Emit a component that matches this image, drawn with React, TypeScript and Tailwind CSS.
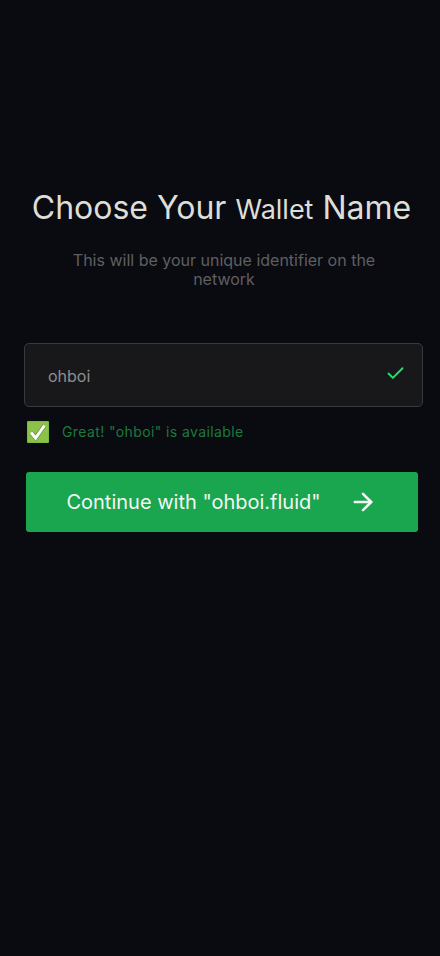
import React from 'react';
import { ArrowRight, Check } from 'lucide-react';

const CheckEmoji = () => (
  <svg width="22" height="22" viewBox="0 0 22 22" className="shrink-0">
    <rect x="0" y="0" width="22" height="22" rx="1" fill="#7fb83f" />
    <rect x="1" y="1" width="20" height="20" rx="1" fill="#8bc34a" />
    <path d="M4 11.5 L8.6 17 L17.5 4.5" fill="none" stroke="#1f3d10" strokeOpacity="0.35" strokeWidth="4.4" />
    <path d="M4 11.5 L8.6 17 L17.5 4.5" fill="none" stroke="#fff" strokeWidth="3" />
  </svg>
);

export default function App() {
  return (
    <div className="w-[440px] h-[956px] bg-[#0a0b10] overflow-hidden font-['Inter',sans-serif]">
      <div className="flex flex-col pt-[187px]">
        <h1 className="pl-[3px] text-center text-[32px] leading-[42px] font-normal text-[#deded9]">
          Choose Your <span className="text-[27px]">Wallet</span> Name
        </h1>
        <p className="mt-[20px] ml-[64px] w-[320px] text-center text-base leading-[19px] text-[#5f5f62]">
          This will be your unique identifier on the network
        </p>
        <div className="mt-[54px] ml-6 w-[399px] h-[64px] flex items-center justify-between pl-[23px] pr-[16px] bg-[#18181b] border border-[#3a3a3e] rounded-[5px]">
          <span className="text-base leading-[26px] pt-[2px] text-[#8e8e90]">ohboi</span>
          <Check size={21} strokeWidth={2.2} className="text-[#22e06b] -mt-[3px]" />
        </div>
        <div className="mt-[14px] ml-[27px] flex items-center gap-[13px]">
          <CheckEmoji />
          <span className="text-sm tracking-[0.4px] text-[#1c7a3c]">Great! "ohboi" is available</span>
        </div>
        <button className="mt-[29px] ml-[26px] w-[392px] h-[60px] flex items-center justify-center gap-[28px] pr-px bg-[#19a64f] rounded-[3px] text-[#f5f5f5] text-[20px]">
          <span>Continue with "ohboi.fluid"</span>
          <ArrowRight size={28} strokeWidth={2.2} />
        </button>
      </div>
    </div>
  );
}
